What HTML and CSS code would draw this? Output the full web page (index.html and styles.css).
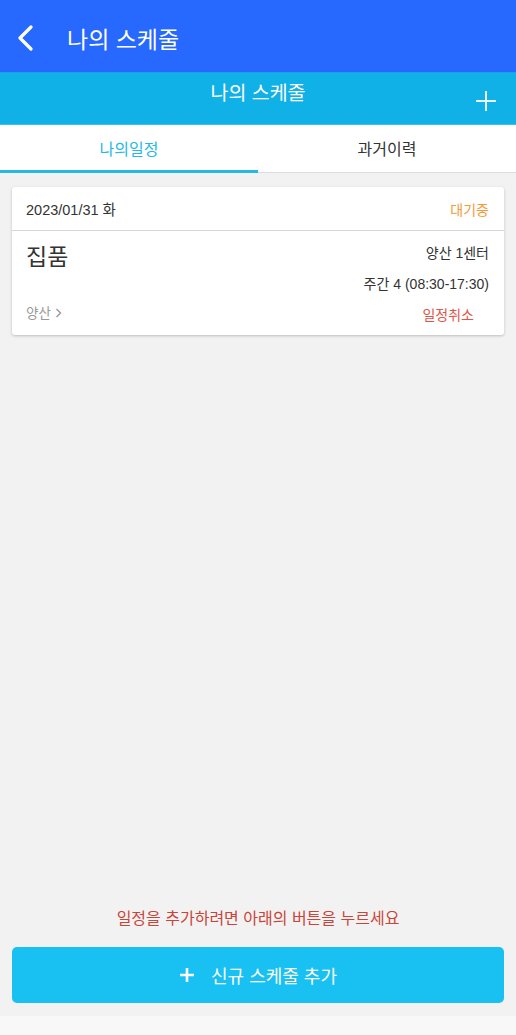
FILE: index.html
```html
<!DOCTYPE html>
<html lang="ko">
<head>
    <meta charset="UTF-8">
    <meta name="viewport" content="width=device-width, initial-scale=1.0">
    <title>나의 스케줄</title>
    <link rel="stylesheet" href="styles.css">
</head>
<body>
    <div class="page">
        <!-- 상단바 -->
        <header class="appbar">
            <svg class="back" width="20" height="26" viewBox="0 0 20 26">
                <path d="M15 2 L4 13 L15 24" fill="none" stroke="#fff" stroke-width="3.2" stroke-linecap="round" stroke-linejoin="round"/>
            </svg>
            <span class="appbar-title">나의 스케줄</span>
        </header>

        <div class="subbar">
            <span class="subbar-title">나의 스케줄</span>
            <svg class="sub-plus" width="22" height="22" viewBox="0 0 22 22">
                <path d="M11 1 V21 M1 11 H21" stroke="#e8f7fd" stroke-width="2"/>
            </svg>
        </div>

        <!-- 탭 -->
        <nav class="tabs">
            <div class="tab active">나의일정</div>
            <div class="tab">과거이력</div>
        </nav>

        <main class="content">
            <div class="card">
                <div class="card-head">
                    <span class="date">2023/01/31 화</span>
                    <span class="status">대기중</span>
                </div>
                <div class="card-body">
                    <div class="row">
                        <span class="job">집품</span>
                        <span class="center">양산 1센터</span>
                    </div>
                    <div class="shift">주간 4 (08:30-17:30)</div>
                    <div class="row bottom">
                        <span class="area">양산 <svg width="7" height="10" viewBox="0 0 7 10"><path d="M1.5 1 L5.5 5 L1.5 9" fill="none" stroke="#999" stroke-width="1.4"/></svg></span>
                        <span class="cancel">일정취소</span>
                    </div>
                </div>
            </div>
        </main>

        <footer class="footer">
            <p class="hint">일정을 추가하려면 아래의 버튼을 누르세요</p>
            <button class="add-btn">
                <svg width="16" height="16" viewBox="0 0 16 16">
                    <path d="M8 1 V15 M1 8 H15" stroke="#fff" stroke-width="2.6"/>
                </svg>
                <span>신규 스케줄 추가</span>
            </button>
        </footer>
        <div class="navstrip"></div>
    </div>
</body>
</html>
```

FILE: styles.css
```css
* {
    box-sizing: border-box;
}
body {
    margin: 0;
    padding: 0;
    font-family: "Liberation Sans", "Noto Sans CJK KR", sans-serif;
    background-color: #f2f2f2;
    color: #333;
}
.page {
    display: flex;
    flex-direction: column;
    min-height: 100vh;
}
.appbar {
    height: 72px;
    background-color: #2768ff;
    display: flex;
    align-items: center;
    padding-left: 16px;
    padding-top: 3px;
    color: #fff;
}
.back {
    margin-right: 31px;
}
.appbar-title {
    font-size: 23px;
}
.subbar {
    position: relative;
    height: 53px;
    background-color: #10b1e6;
    border-top: 1px solid #1d9cf0;
    border-bottom: 1px solid #3cc0ee;
    color: #fff;
    text-align: center;
}
.subbar-title {
    display: block;
    font-size: 19.5px;
    line-height: 41px;
}
.sub-plus {
    position: absolute;
    right: 19px;
    top: 17px;
}
.tabs {
    display: flex;
    height: 48px;
    background: #fff;
    border-bottom: 1px solid #dcdcdc;
}
.tab {
    flex: 1;
    text-align: center;
    font-size: 16px;
    line-height: 50px;
    color: #333;
}
.tab.active {
    color: #26b8e6;
    border-bottom: 3px solid #26b8e6;
    margin-bottom: -1px;
}
.content {
    flex: 1;
    padding: 14px 12px;
}
.card {
    background: #fff;
    border-radius: 3px;
    box-shadow: 0 1px 3px rgba(0, 0, 0, 0.22);
}
.card-head {
    height: 44px;
    display: flex;
    justify-content: space-between;
    align-items: center;
    padding: 0 15px 0 14px;
    border-bottom: 1px solid #d6d6d6;
    font-size: 14.5px;
}
.date {
    color: #333;
}
.status {
    color: #f49a34;
    font-size: 14px;
}
.card-body {
    padding: 10px 15px 11px 14px;
}
.row {
    display: flex;
    justify-content: space-between;
    align-items: flex-start;
}
.job {
    font-size: 23px;
    color: #333;
    line-height: 32px;
}
.center {
    font-size: 14px;
    line-height: 24px;
}
.shift {
    text-align: right;
    font-size: 14px;
    line-height: 22px;
    margin-top: 0;
}
.bottom {
    margin-top: 5px;
    align-items: center;
}
.area {
    font-size: 13.5px;
    color: #999;
}
.cancel {
    font-size: 14px;
    color: #e05548;
    margin-right: 15px;
    margin-top: 4px;
}
.footer {
    padding: 0 12px 13px;
}
.hint {
    margin: 0 0 18px;
    text-align: center;
    font-size: 16px;
    color: #c9453a;
}
.add-btn {
    width: 100%;
    height: 56px;
    display: flex;
    align-items: center;
    justify-content: center;
    gap: 16px;
    background-color: #18c1f2;
    border: none;
    border-radius: 5px;
    color: #fff;
    font-family: "Liberation Sans", "Noto Sans CJK KR", sans-serif;
    font-size: 18px;
}
.navstrip {
    height: 19px;
    background: #f8f8f8;
}
```
